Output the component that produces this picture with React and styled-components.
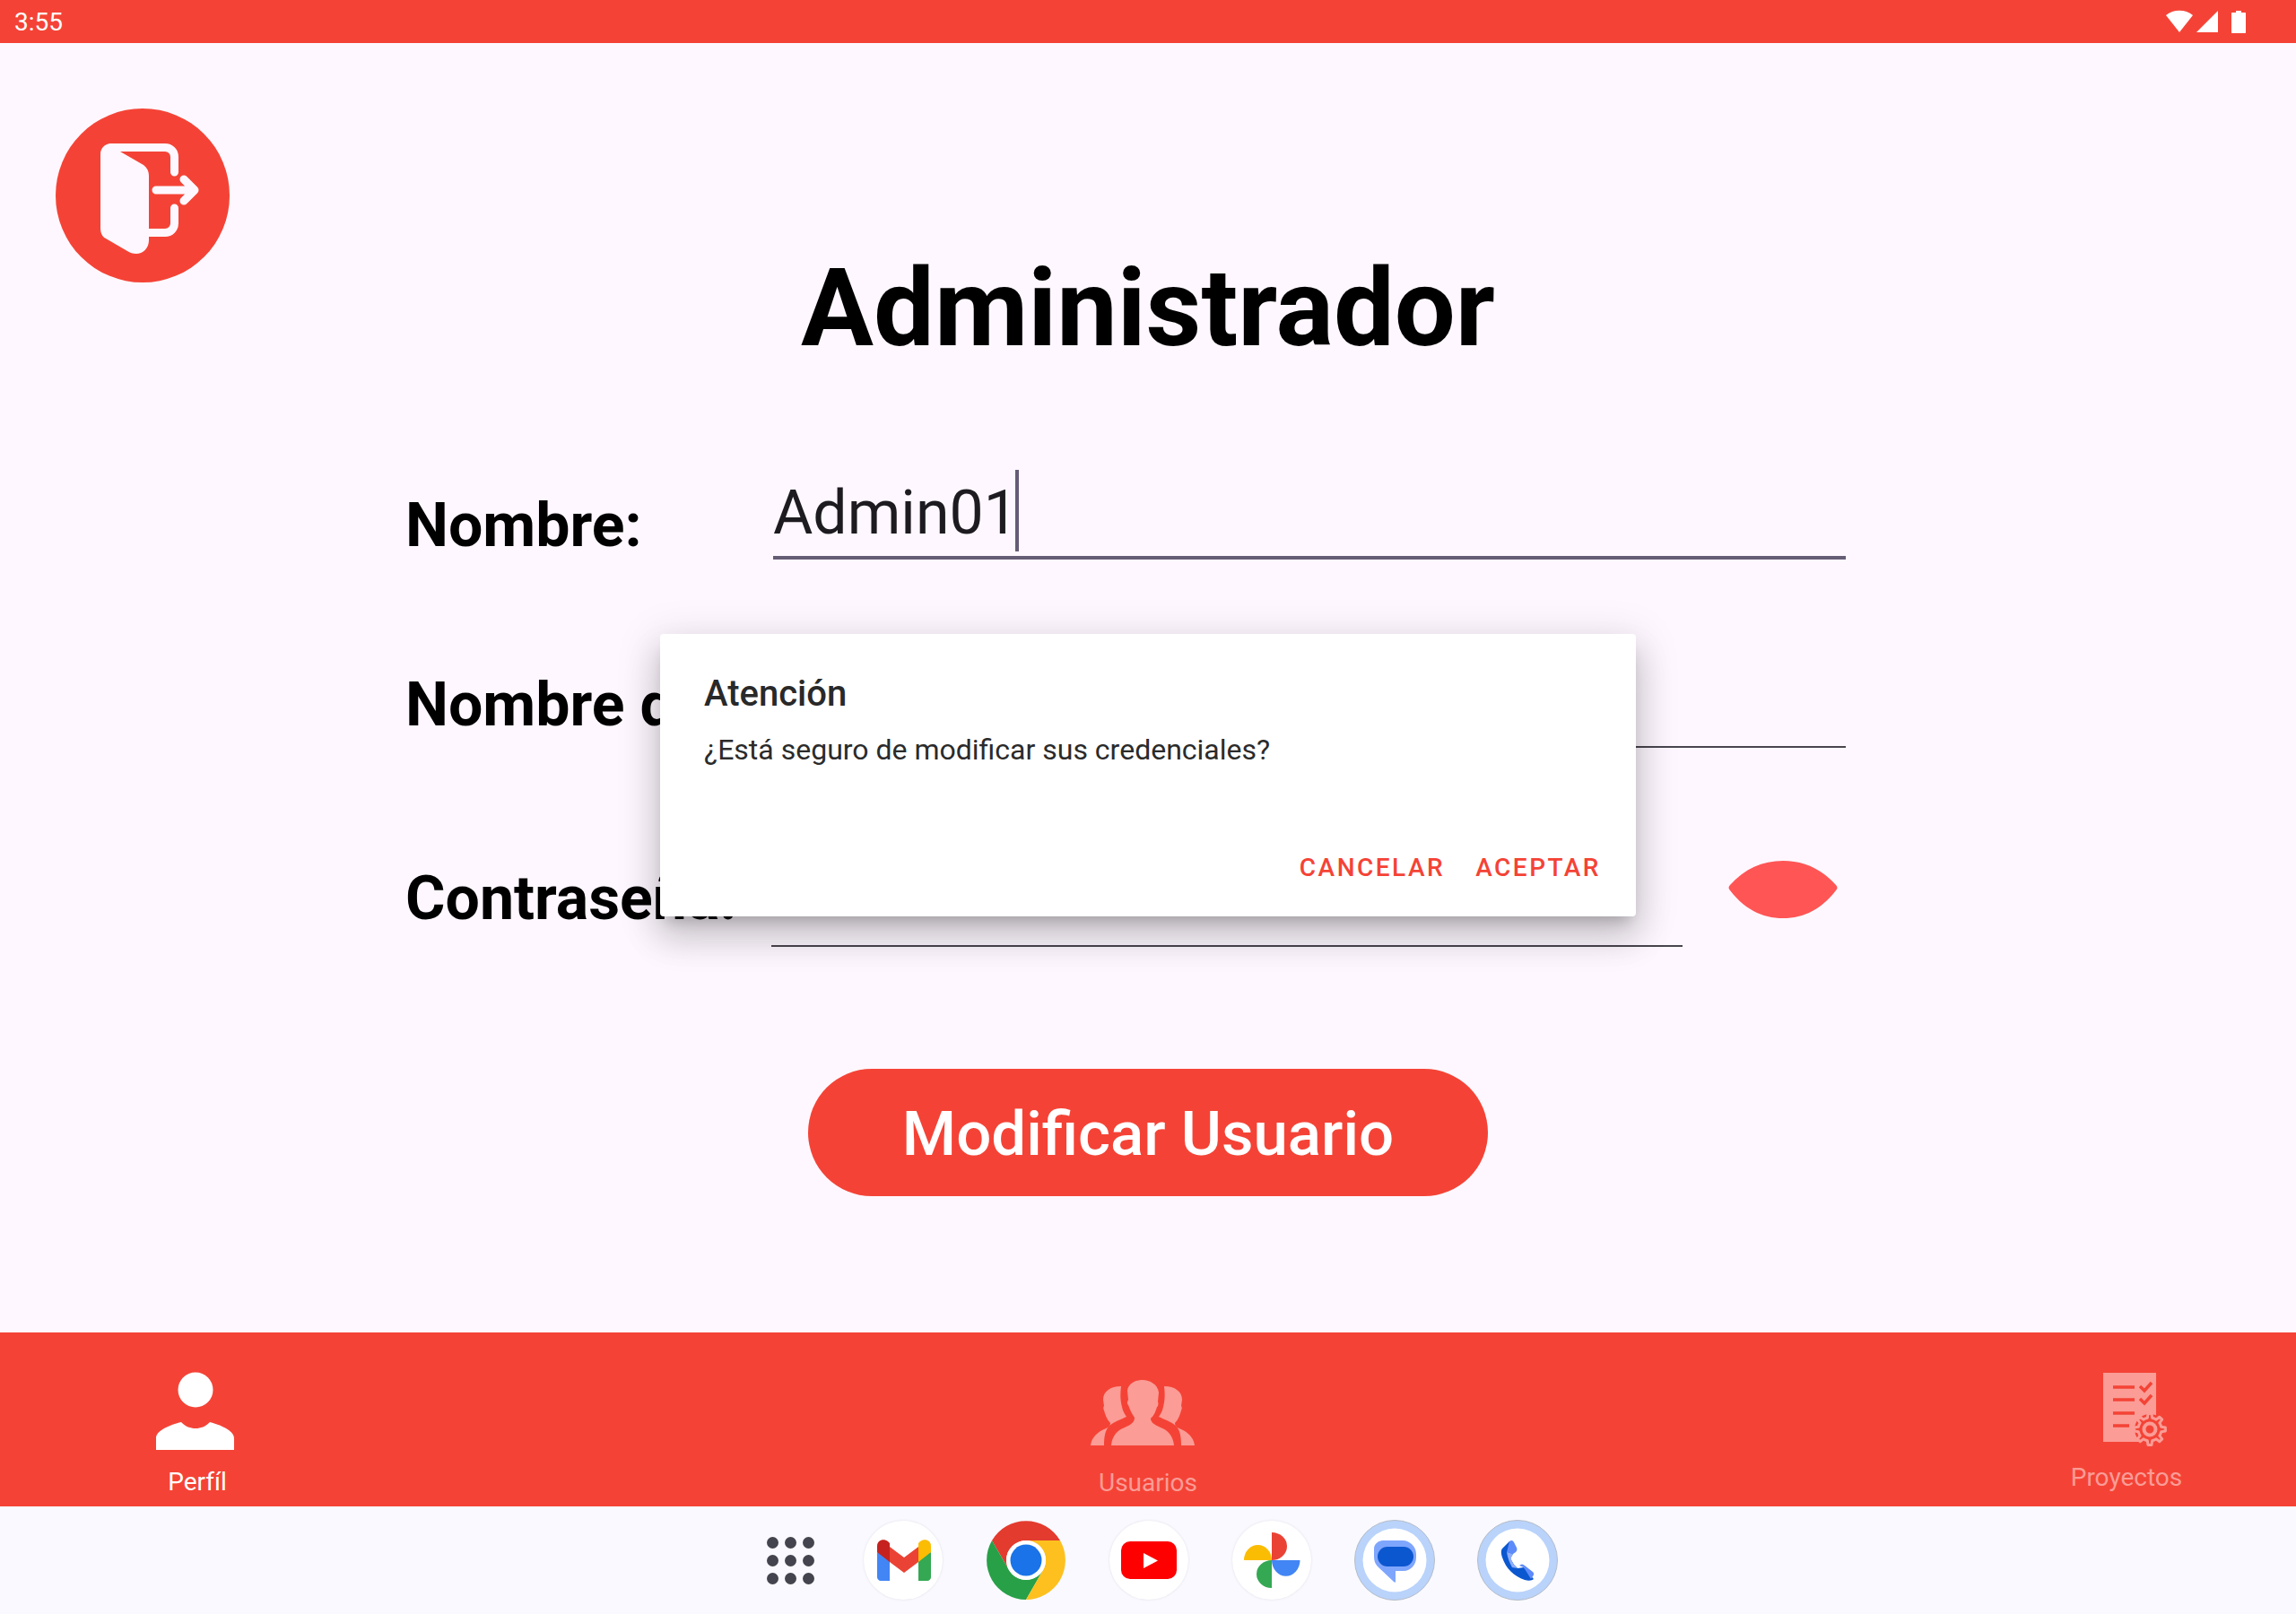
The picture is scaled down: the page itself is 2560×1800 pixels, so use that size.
import React from 'react';
import styled, { createGlobalStyle } from 'styled-components';

const RED = '#F44336';
const PALE = '#FB9C96';

const GlobalStyle = createGlobalStyle`
	html, body {
		margin: 0;
		padding: 0;
		background: #FEF7FF;
		font-family: Roboto, "Liberation Sans", sans-serif;
	}
`

const Screen = styled.div`
	position: relative;
	display: flex;
	flex-direction: column;
	width: 2560px;
	height: 1800px;
	overflow: hidden;
	background: #FEF7FF;
`

const StatusBar = styled.div`
	display: flex;
	align-items: center;
	justify-content: space-between;
	height: 48px;
	padding: 0 56px 0 16px;
	flex: none;
	background: ${RED};
	color: #fff;
	font-size: 28px;
`

const Main = styled.main`
	flex: 1;
	min-height: 0;
	padding-top: 73px;
`

const LogoutButton = styled.button`
	display: block;
	width: 194px;
	height: 194px;
	margin: 0 0 0 62px;
	padding: 0;
	border: 0;
	border-radius: 50%;
	background: ${RED};
`

const Title = styled.h1`
	margin: -42px 0 0;
	text-align: center;
	font-size: 120.500px;
	line-height: 141px;
	font-weight: 700;
	color: #000;
`

const Form = styled.div`
	display: flex;
	flex-direction: column;
	margin: 0 502px 0 452px;
`

const Row = styled.div`
	display: grid;
	grid-template-columns: 410px 1fr ${p => p.$withEye ? '180px' : ''};
	align-items: end;
	height: ${p => p.$height}px;
`

const Label = styled.div`
	font-size: 68px;
	line-height: 80px;
	font-weight: 700;
	color: #000;
	white-space: nowrap;
	transform: translateY(${p => p.$drop}px);
`

const Field = styled.div`
	display: flex;
	align-items: flex-end;
	height: 100px;
	padding-bottom: 3px;
	border-bottom: ${p => p.$active ? '4px solid #655D75' : '2px solid #49454F'};
	font-size: 68px;
	line-height: 90px;
	color: #1D1B20;
	transform: translateX(${p => p.$shift || 0}px);
`

const Caret = styled.span`
	display: block;
	width: 4px;
	height: 91px;
	margin: 0 0 2px -3px;
	background: #655D75;
`

const EyeBox = styled.div`
	display: flex;
	justify-content: flex-end;
	padding-right: 9px;
	padding-bottom: 31px;
`

const SubmitButton = styled.button`
	display: block;
	width: 758px;
	height: 142px;
	margin: 136px auto 0;
	padding: 3px 0 0;
	border: 0;
	border-radius: 71px;
	background: ${RED};
	color: #fff;
	font-family: inherit;
	font-size: 69px;
	font-weight: 500;
`

const Dialog = styled.div`
	position: absolute;
	left: 736px;
	top: 707px;
	display: flex;
	flex-direction: column;
	box-sizing: border-box;
	width: 1088px;
	height: 315px;
	padding: 43px 39px 0 49px;
	border-radius: 4px;
	background: #fff;
	box-shadow: 0 24px 38px 3px rgba(0,0,0,.14), 0 9px 46px 8px rgba(0,0,0,.1), 0 11px 15px -7px rgba(0,0,0,.2);
`

const DialogTitle = styled.div`
	font-size: 40px;
	line-height: 47px;
	font-weight: 500;
	color: #292929;
`

const DialogBody = styled.div`
	margin-top: 19px;
	font-size: 32px;
	line-height: 40px;
	color: #2B2B2B;
`

const DialogActions = styled.div`
	display: flex;
	justify-content: flex-end;
	gap: 34px;
	margin-top: 95px;
`

const DialogAction = styled.span`
	font-size: 28px;
	line-height: 33px;
	font-weight: 500;
	letter-spacing: 2.5px;
	color: ${RED};
`

const BottomNav = styled.nav`
	display: grid;
	grid-template-columns: 440px 1fr 440px;
	height: 194px;
	flex: none;
	background: ${RED};
`

const Tab = styled.div`
	display: flex;
	flex-direction: column;
	align-items: center;
	padding-top: ${p => p.$top}px;
	padding-left: ${p => p.$left || 0}px;
	padding-right: ${p => p.$right || 0}px;
	color: ${p => p.$active ? '#fff' : PALE};
`

const TabLabel = styled.span`
	margin-top: ${p => p.$gap}px;
	font-size: 28px;
	line-height: 33px;
	transform: translateX(${p => p.$shift || 0}px);
`

const Dock = styled.div`
	display: flex;
	align-items: center;
	justify-content: center;
	gap: 49px;
	height: 120px;
	flex: none;
	padding-left: 2px;
	background: #F9F9FF;
`

const AppGrid = styled.div`
	display: grid;
	grid-template-columns: repeat(3, 13px);
	grid-auto-rows: 13px;
	gap: 7px;
	box-sizing: border-box;
	width: 88px;
	padding-left: 29px;
`

const AppDot = styled.span`
	border-radius: 50%;
	background: #44444F;
`

const DockIcon = styled.div`
	display: flex;
	align-items: center;
	justify-content: center;
	width: 88px;
	height: 88px;
	border-radius: 50%;
	background: #fff;
	box-shadow: 0 0 3px rgba(0,0,0,.1);
`

const RingIcon = styled.svg`
	display: block;
	margin: 0 -1px;
`

const StatusIcons = styled.div`
	display: flex;
	align-items: center;
	gap: 3px;
`

const BatteryBox = styled.span`
	display: flex;
	margin-left: 12px;
`

const gearPath = (cx, cy, outer, inner, teeth) => {
	const step = (Math.PI * 2) / teeth;
	let d = '';
	for (let i = 0; i < teeth; i++) {
		const a = i * step - Math.PI / 2;
		const pts = [
			[inner, a - step * 0.5],
			[inner, a - step * 0.26],
			[outer, a - step * 0.15],
			[outer, a + step * 0.15],
			[inner, a + step * 0.26],
		];
		pts.forEach(([r, t], j) => {
			d += `${i === 0 && j === 0 ? 'M' : 'L'}${(cx + r * Math.cos(t)).toFixed(2)} ${(cy + r * Math.sin(t)).toFixed(2)}`;
		});
	}
	return d + 'Z';
};

const LogoutIcon = () => (
	<svg width="194" height="194" viewBox="0 0 194 194" fill="none">
		<path d="M62 43.500H122C128 43.500 132.500 48 132.500 54V71M132.500 111V128C132.500 134 128 138.500 122 138.500H104" stroke="#FEF7FF" strokeWidth="9" strokeLinecap="round" strokeLinejoin="round" />
		<path d="M62 39H72V48L98 63C102 66 104 70 104 75V147C104 156 97 162 90 162C86 162 83 161 80 159L56 145C52 143 50 139 50 133V51C50 44 55 39 62 39Z" fill="#FEF7FF" />
		<path d="M112 91H154M143 79L155 91L143 103" stroke="#FEF7FF" strokeWidth="9" strokeLinecap="round" strokeLinejoin="round" />
	</svg>
);

const EyeIcon = () => (
	<svg width="122" height="66" viewBox="0 0 122 66">
		<path d="M2 28C18 10 38 1 61 1C84 1 104 10 120 28C122 30 122 32 120 34C104 55 84 65 61 65C38 65 18 55 2 34C0 32 0 30 2 28Z" fill="#FF5555" />
	</svg>
);

const WifiIcon = () => (
	<svg width="32" height="26" viewBox="0 0 32 26">
		<path d="M1 6C9 -1 23 -1 31 6L16 25Z" fill="#fff" />
	</svg>
);

const SignalIcon = () => (
	<svg width="24" height="24" viewBox="0 0 24 24">
		<path d="M0 24L24 0V24Z" fill="#fff" />
	</svg>
);

const BatteryIcon = () => (
	<svg width="16" height="25" viewBox="0 0 16 25">
		<path d="M5 0H11V2H15C15.600 2 16 2.400 16 3V24C16 24.600 15.600 25 15 25H1C.4 25 0 24.600 0 24V3C0 2.400 .4 2 1 2H5Z" fill="#fff" />
	</svg>
);

const PersonIcon = () => (
	<svg width="87" height="88" viewBox="0 0 87 88">
		<circle cx="44" cy="20" r="19.500" fill="#fff" />
		<path d="M0 87V74C0 65 16 59 28 56C33 61 38 63 44 63C50 63 55 61 60 56C71 59 87 65 87 74V87Z" fill="#fff" />
	</svg>
);

const UsersIcon = () => {
	const side = 'M0 73C1 64 8 58 15 55C20 53 22 51 22 48C18 44 16 38 15 34C14 32 14 30 15 29L14 22C14 13 22 7 34 7C33 16 33 22 35 30C36 35 38 38 40 41C34 44 27 46 21 51C16 56 15 64 15 73Z';
	return (
		<svg width="116" height="74" viewBox="0 0 116 74" fill={PALE}>
			<path d={side} />
			<path d={side} transform="translate(116 0) scale(-1 1)" />
			<path d="M23 73C24 62 30 56 38 53C45 50 49 47 49 42C46 38 44 33 42 28C40 26 41 24 42 22L41 12C42 4 50 0 58 0C66 0 75 5 76 14L75 24C76 27 75 30 74 30C72 37 70 40 67 43C67 47 71 50 78 53C86 56 92 62 93 73Z" />
		</svg>
	);
};

const ProjectsIcon = () => (
	<svg width="76" height="82" viewBox="0 0 76 82" fill="none">
		<rect width="59" height="77" fill={PALE} />
		<g stroke={RED} strokeWidth="3.500">
			<path d="M11 16H35M11 30H35M11 45H35M11 59H29" />
			<path d="M41 15L46 20L54 11M41 29L46 34L54 25" />
		</g>
		<circle cx="52" cy="63" r="17" fill={RED} />
		<path d={gearPath(52, 63, 17.500, 13, 8)} fill={RED} stroke={PALE} strokeWidth="3" strokeLinejoin="round" />
		<circle cx="52" cy="63" r="6.500" stroke={PALE} strokeWidth="4" />
	</svg>
);

const GmailIcon = () => (
	<svg width="88" height="88" viewBox="0 0 88 88">
		<path d="M15 35L29 40V67H19C17 67 15 65 15 63Z" fill="#4285F4" />
		<path d="M61 40L75 35V63C75 65 73 67 71 67H61Z" fill="#34A853" />
		<path d="M29 29L45 41L61 29V46L45 58L29 46Z" fill="#EA4335" />
		<path d="M15 35V28C15 22 22 19 27 23L29 25V46Z" fill="#C5221F" />
		<path d="M61 46V25L63 23C68 19 75 22 75 28V35Z" fill="#FBBC04" />
	</svg>
);

const ChromeIcon = () => (
	<svg width="88" height="88" viewBox="0 0 88 88">
		<path d="M6 22A44 44 0 0 1 82 22H44A22 22 0 0 0 25 55Z" fill="#E33B2E" />
		<path d="M6 22L25 55A22 22 0 0 0 63 55L44 88A44 44 0 0 1 6 22Z" fill="#28A048" />
		<path d="M82 22H44A22 22 0 0 1 63 55L44 88A44 44 0 0 0 82 22Z" fill="#FDC01E" />
		<circle cx="44" cy="44" r="22" fill="#fff" />
		<circle cx="44" cy="44" r="17.500" fill="#1A73E8" />
	</svg>
);

const YoutubeIcon = () => (
	<svg width="88" height="88" viewBox="0 0 88 88">
		<rect x="13" y="23" width="62" height="42" rx="10" fill="#FF0000" />
		<path d="M38 36L54 44.500L38 53Z" fill="#fff" />
	</svg>
);

const PhotosIcon = () => (
	<svg width="88" height="88" viewBox="0 0 88 88">
		<path d="M44 13A17 15.500 0 0 1 44 44Z" fill="#EA4335" />
		<path d="M44 44H75.500A15.500 17.500 0 0 1 44 44Z" fill="#4285F4" />
		<path d="M44 44V75A17 15.500 0 0 1 44 44Z" fill="#34A853" />
		<path d="M44 44H13A15.500 17 0 0 1 44 44Z" fill="#FBBC04" />
	</svg>
);

const MessagesIcon = () => (
	<RingIcon width="90" height="90" viewBox="0 0 90 90">
		<circle cx="45" cy="45" r="44.500" fill="#B9D3FB" stroke="#B5BCC8" strokeWidth="1" />
		<circle cx="45" cy="45" r="35.500" fill="#fff" />
		<path d="M22 32C22 27 27 23 32 23H54C62 23 69 30 69 38V42C69 50 63 57 55 57H46V69C46 70 45 70 44 69L26 52C23 49 22 45 22 41Z" fill="#7FA6FD" />
		<rect x="26" y="30" width="40" height="22" rx="11" fill="#0B57D0" />
	</RingIcon>
);

const PhoneIcon = () => (
	<RingIcon width="90" height="90" viewBox="0 0 90 90">
		<circle cx="45" cy="45" r="44.500" fill="#B9D3FB" stroke="#B5BCC8" strokeWidth="1" />
		<circle cx="45" cy="45" r="35.500" fill="#fff" />
		<path d="M36 24L28 32C26 34 27 39 28 42C32 54 41 63 53 67C57 68 61 68 63 66L52 53L45 54L41 50L37 43L40 38Z" fill="#0B57D0" />
		<path d="M36 24C38 22 40 23 41 25L44 31C45 33 44 35 43 36L40 38L33 36Z" fill="#5E8BFA" />
		<path d="M52 53L47 51C49 49 51 49 53 51L62 58C64 60 63 62 62 63L60 66Z" fill="#5E8BFA" />
		<path d="M33 36L40 38C37 43 37 43 41 50L45 54L39 53C36 48 34 42 33 36Z" fill="#8EADFB" />
	</RingIcon>
);

const App = () => (
	<Screen>
		<GlobalStyle />
		<StatusBar>
			<span>3:55</span>
			<StatusIcons>
				<WifiIcon />
				<SignalIcon />
				<BatteryBox><BatteryIcon /></BatteryBox>
			</StatusIcons>
		</StatusBar>

		<Main>
			<LogoutButton><LogoutIcon /></LogoutButton>
			<Title>Administrador</Title>
			<Form>
				<Row $height={210}>
					<Label $drop={2}>Nombre:</Label>
					<Field $active>Admin01<Caret /></Field>
				</Row>
				<Row $height={210}>
					<Label $drop={-8}>Nombre de usuario:</Label>
					<Field />
				</Row>
				<Row $height={222} $withEye>
					<Label $drop={-14}>Contraseña:</Label>
					<Field $shift={-2} />
					<EyeBox><EyeIcon /></EyeBox>
				</Row>
			</Form>
			<SubmitButton>Modificar Usuario</SubmitButton>
		</Main>

		<BottomNav>
			<Tab $active $top={44} $right={6}>
				<PersonIcon />
				<TabLabel $gap={18} $shift={3}>Perfíl</TabLabel>
			</Tab>
			<Tab $top={53} $right={12}>
				<UsersIcon />
				<TabLabel $gap={24} $shift={6}>Usuarios</TabLabel>
			</Tab>
			<Tab $top={45} $left={86}>
				<ProjectsIcon />
				<TabLabel $gap={18} $shift={-12}>Proyectos</TabLabel>
			</Tab>
		</BottomNav>

		<Dock>
			<AppGrid>
				{Array.from({ length: 9 }).map((_, i) => <AppDot key={i} />)}
			</AppGrid>
			<DockIcon><GmailIcon /></DockIcon>
			<ChromeIcon />
			<DockIcon><YoutubeIcon /></DockIcon>
			<DockIcon><PhotosIcon /></DockIcon>
			<MessagesIcon />
			<PhoneIcon />
		</Dock>

		<Dialog>
			<DialogTitle>Atención</DialogTitle>
			<DialogBody>¿Está seguro de modificar sus credenciales?</DialogBody>
			<DialogActions>
				<DialogAction>CANCELAR</DialogAction>
				<DialogAction>ACEPTAR</DialogAction>
			</DialogActions>
		</Dialog>
	</Screen>
);

export default App;
